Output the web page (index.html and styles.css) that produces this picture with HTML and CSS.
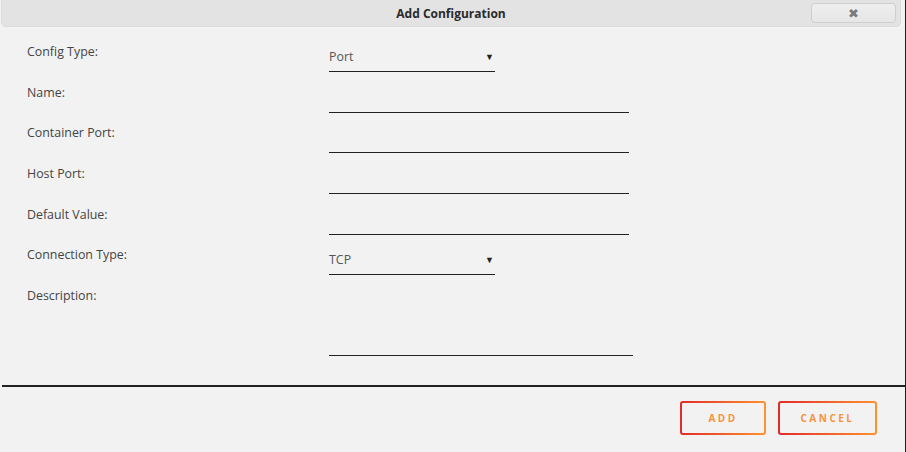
FILE: index.html
```html
<!DOCTYPE html>
<html lang="en">
<head>
  <meta charset="UTF-8">
  <meta name="viewport" content="width=device-width, initial-scale=1.0">
  <link rel="stylesheet" href="styles.css">
  <title>Add Configuration</title>
</head>
<body>

  <div id="dialog">
    <div class="title-bar">
      <span class="title">Add Configuration</span>
      <button class="close-button">&#x2716;</button>
    </div>

    <div class="config-form">
      <div class="row">
        <label>Config Type:</label>
        <div class="field select-field"><span>Port</span><span class="arrow">&#x25BC;</span></div>
      </div>
      <div class="row">
        <label>Name:</label>
        <div class="field text-field"></div>
      </div>
      <div class="row">
        <label>Container Port:</label>
        <div class="field text-field"></div>
      </div>
      <div class="row">
        <label>Host Port:</label>
        <div class="field text-field"></div>
      </div>
      <div class="row">
        <label>Default Value:</label>
        <div class="field text-field"></div>
      </div>
      <div class="row">
        <label>Connection Type:</label>
        <div class="field select-field"><span>TCP</span><span class="arrow">&#x25BC;</span></div>
      </div>
      <div class="row description-row">
        <label>Description:</label>
        <div class="field description-field"></div>
      </div>
    </div>

    <div class="footer">
      <button class="action-button add-button">ADD</button>
      <button class="action-button cancel-button">CANCEL</button>
    </div>
  </div>

</body>
</html>
```

FILE: styles.css
```css
body {
  margin: 0;
  padding: 0;
  background-color: #f2f2f2;
  font-family: "Open Sans", sans-serif;
}

#dialog {
  box-sizing: border-box;
  width: 906px;
  height: 452px;
  border-right: 1px solid #1e1e1e;
  display: flex;
  flex-direction: column;
}

.title-bar {
  height: 27px;
  margin: 0 4px 0 1px;
  background-color: #e3e3e3;
  border: 1px solid #dcdcdc;
  border-top: none;
  border-radius: 0 0 5px 5px;
  box-sizing: border-box;
  display: flex;
  align-items: center;
  justify-content: center;
  position: relative;
}

.title {
  font-size: 12px;
  font-weight: bold;
  color: #2a2a2a;
}

.close-button {
  position: absolute;
  right: 4px;
  top: 3px;
  width: 85px;
  height: 20px;
  border: 1px solid #cfcfcf;
  border-radius: 4px;
  background: linear-gradient(#efefef, #e6e6e6);
  color: #7a7a7a;
  font-size: 13px;
  line-height: 1;
  padding: 0;
}

.config-form {
  padding: 17px 0 0 27px;
}

.row {
  display: grid;
  grid-template-columns: 302px auto;
  align-items: start;
  height: 40.67px;
}

.description-row {
  height: auto;
}

.row label {
  font-size: 12.4px;
  line-height: 16px;
  color: #444;
}

.field {
  box-sizing: border-box;
  margin-top: 1px;
  height: 27px;
  border-bottom: 1px solid #222;
}

.select-field {
  width: 166px;
  display: flex;
  align-items: center;
  justify-content: space-between;
  font-size: 12.4px;
  color: #555;
  padding-bottom: 3px;
}

.select-field .arrow {
  font-size: 9px;
  color: #222;
  margin-right: 1px;
}

.text-field {
  width: 300px;
}

.description-field {
  width: 304px;
  height: 67px;
}

.footer {
  margin: 29px 0 0 2px;
  border-top: 2px solid #222;
  display: flex;
  justify-content: flex-end;
  gap: 12px;
  padding: 14px 28px 0 0;
}

.action-button {
  height: 34px;
  border: 2px solid transparent;
  border-radius: 3px;
  background: linear-gradient(#f2f2f2, #f2f2f2) padding-box,
              linear-gradient(90deg, #e42a2a, #ff922e) border-box;
  color: #f7923c;
  font-family: "Open Sans", sans-serif;
  font-size: 10px;
  font-weight: bold;
  letter-spacing: 2.5px;
  padding: 0;
}

.add-button {
  width: 86px;
}

.cancel-button {
  width: 99px;
}
```
